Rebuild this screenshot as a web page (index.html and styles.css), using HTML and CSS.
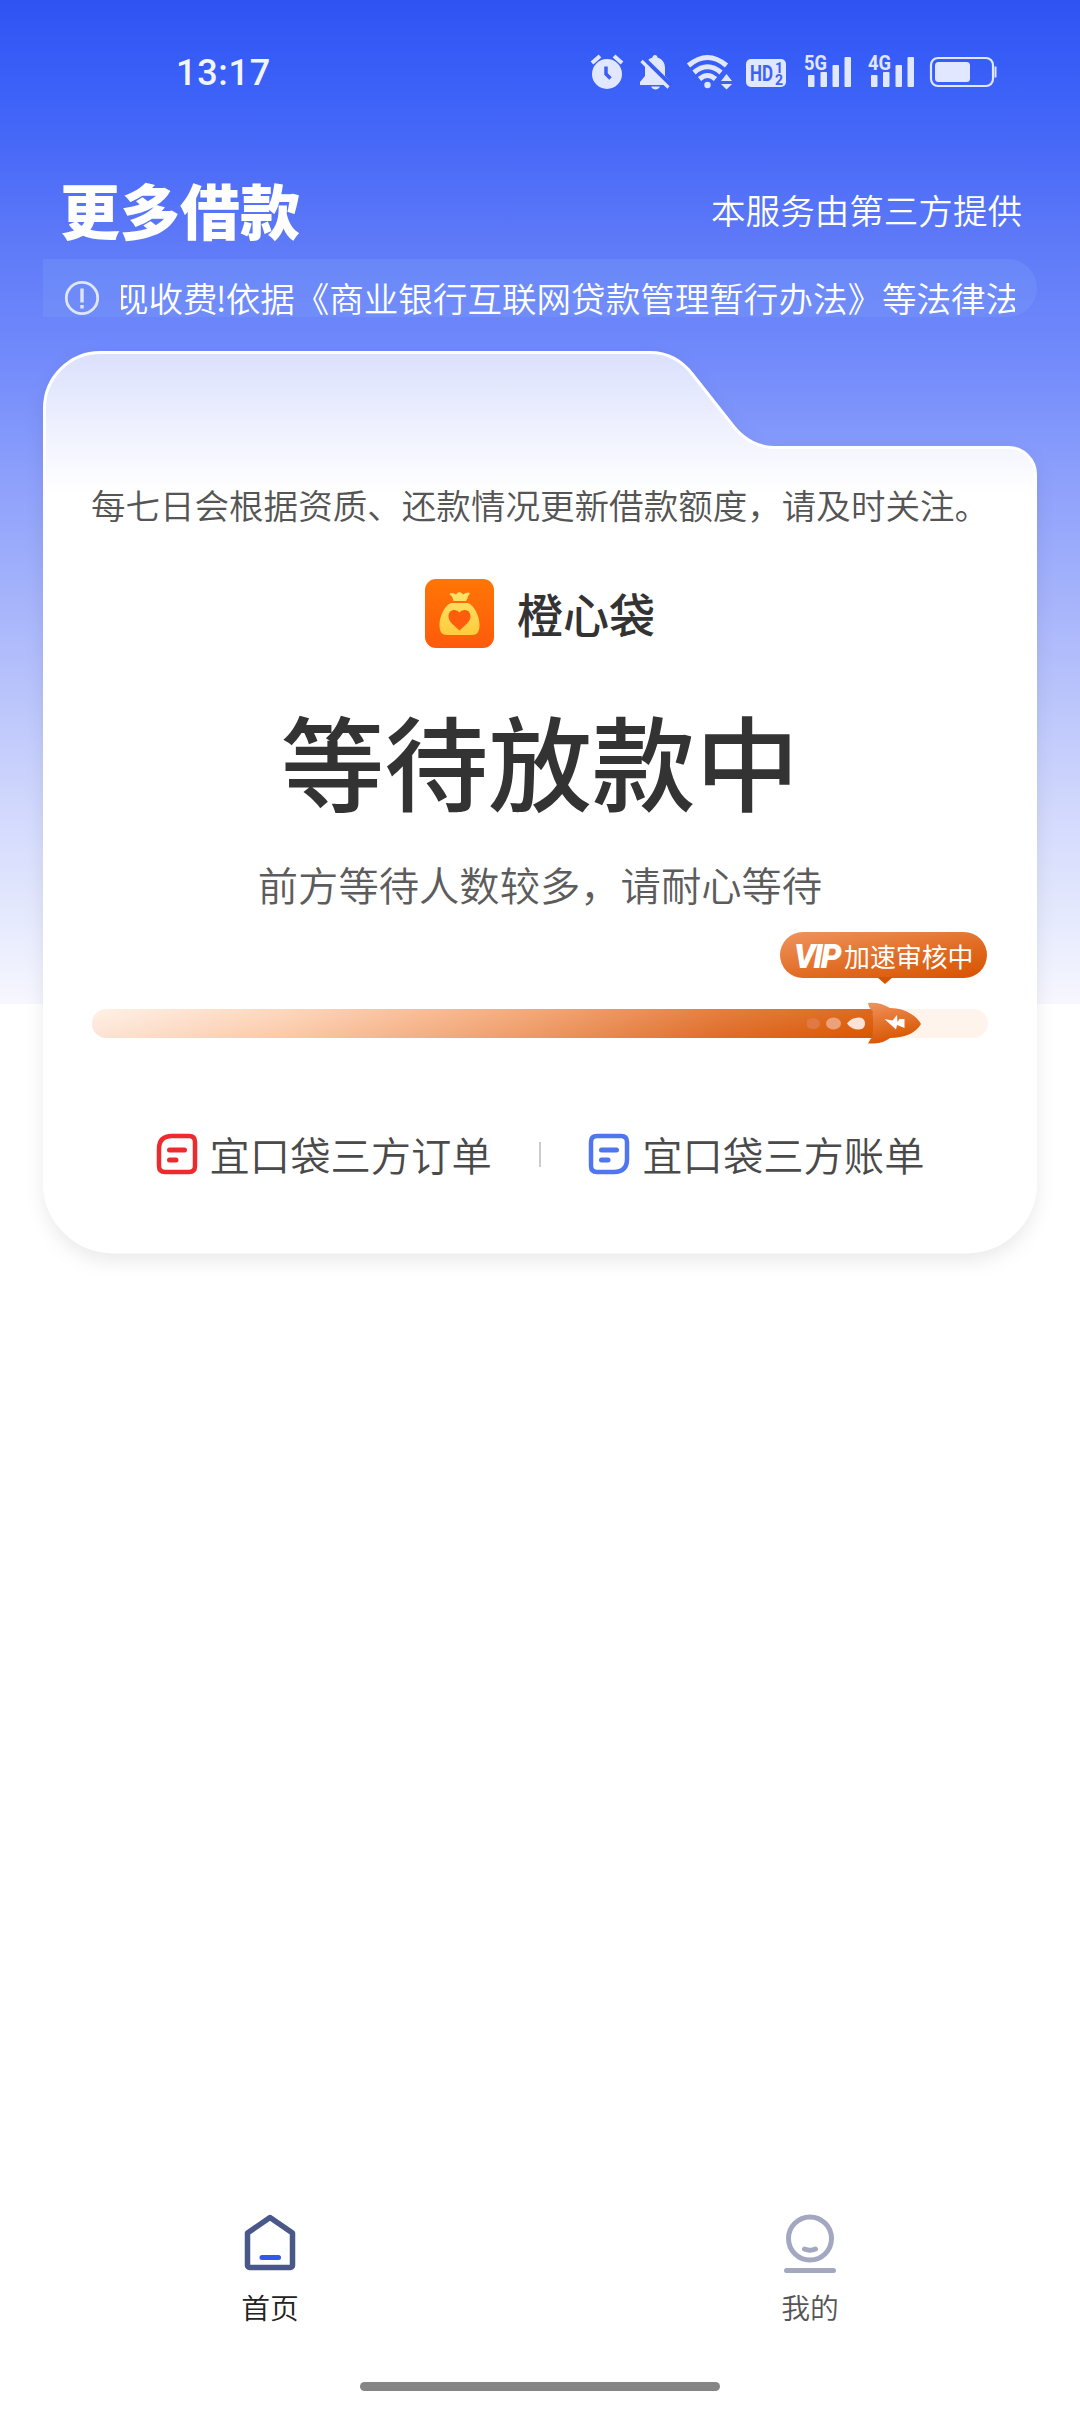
FILE: index.html
```html
<!DOCTYPE html>
<html lang="zh-CN">
<head>
<meta charset="utf-8">
<title>更多借款</title>
<link rel="stylesheet" href="styles.css">
</head>
<body>
<div class="screen">
  <div class="status">
    <span class="time">13:17</span>
    <svg class="status-icons" width="440" height="40" viewBox="590 52 440 40">
      <g fill="#e1e7ff">
        <circle cx="607" cy="74" r="15"/>
        <path d="M592 63l8-7M622 63l-8-7" stroke="#e1e7ff" stroke-width="4"/>
        <path d="M606 66.500v7.500l4.500 4.500" fill="none" stroke="#3a5ff5" stroke-width="3.500"/>
        <path d="M655 55c1.500 0 2.500 1 2.500 2.500 5 1.500 7.500 5.500 7.500 10.500v8l4.500 5v4h-29.500v-3l5-6v-8c0-5 2.500-9 7.500-10.500 0-1.500 1-2.500 2.500-2.500z"/>
        <path d="M651 86.500h9q-1.500 3-4.500 3t-4.500-3z"/>
        <path d="M642.500 58.500l28 27.500" stroke="#385df5" stroke-width="6"/>
        <path d="M641.500 61l27 26.500" stroke="#e1e7ff" stroke-width="3.200"/>
        <g fill="none" stroke="#e1e7ff" stroke-width="5">
          <path d="M688.500 65.500q19-16 38 0"/><path d="M694 72.500q13.500-11.500 27 0"/><path d="M699.500 79q8-7 16 0"/>
        </g>
        <circle cx="707.500" cy="85" r="3.200"/>
        <path d="M721 81l5.500-7 5.500 7zM721 84l5.500 5.500 5.500-5.500z"/>
        <rect x="746" y="59" width="40" height="28" rx="5"/>
        <rect x="808" y="75" width="6.500" height="12" rx="1"/><rect x="820.500" y="72" width="6.500" height="15" rx="1"/><rect x="832.500" y="65" width="6.500" height="22" rx="1"/><rect x="844.500" y="57" width="6.500" height="30" rx="1"/>
        <rect x="871" y="75" width="6.500" height="12" rx="1"/><rect x="883" y="72" width="6.500" height="15" rx="1"/><rect x="895.500" y="65" width="6.500" height="22" rx="1"/><rect x="907.500" y="57" width="6.500" height="30" rx="1"/>
        <rect x="935" y="62" width="35" height="20" rx="3.500"/>
        <rect x="931" y="58" width="62" height="28" rx="7" fill="none" stroke="#e1e7ff" stroke-width="2.200"/>
        <path d="M994.500 66.500h2v11h-2z"/>
      </g>
      <g font-family="Roboto" font-weight="700" fill="#3d61f5">
        <text x="750" y="81" font-size="22" textLength="23" lengthAdjust="spacingAndGlyphs">HD</text>
        <text x="775" y="72.500" font-size="14">1</text><text x="775" y="85" font-size="14">2</text>
      </g>
      <g font-family="Roboto" font-weight="700" fill="#e1e7ff" font-size="21">
        <text x="804" y="70" textLength="23" lengthAdjust="spacingAndGlyphs">5G</text>
        <text x="868" y="70" textLength="23" lengthAdjust="spacingAndGlyphs">4G</text>
      </g>
    </svg>
  </div>
  <header class="header">
    <h1>更多借款</h1>
    <span>本服务由第三方提供</span>
  </header>
  <div class="notice">
    <svg width="36" height="36" viewBox="0 0 36 36" fill="none" stroke="#dfe6ff" stroke-width="2.800"><circle cx="18" cy="18" r="15.700"/><path d="M18 8.500v14M18 25v3.500" stroke-width="3.400"/></svg>
    <div class="marquee"><p>现收费<i>!</i>依据《商业银行互联网贷款管理暂行办法》等法律法</p></div>
  </div>
  <main class="card">
    <svg class="card-shape" width="1080" height="960" viewBox="0 0 1080 960">
      <defs><linearGradient id="cardFill" x1="0" y1="0" x2="0" y2="1"><stop offset="0" stop-color="#dbe0fd"/><stop offset=".155" stop-color="#fff"/></linearGradient></defs>
      <path fill="url(#cardFill)" stroke="#fff" stroke-width="3" d="M44.500 98.500A56 56 0 0 1 100.500 42.500H650Q676 42.500 693 65L734 117Q751 137.500 775 137.500H1008A27 27 0 0 1 1035.500 164.500V873A69 69 0 0 1 966.500 942H113.500A69 69 0 0 1 44.500 873Z"/>
    </svg>
    <p class="hint">每七日会根据资质、还款情况更新借款额度，请及时关注。</p>
    <div class="brand">
      <svg width="69" height="69" viewBox="0 0 69 69">
        <defs><linearGradient id="or" x1="0" y1="0" x2="0" y2="1"><stop offset="0" stop-color="#ff7605"/><stop offset="1" stop-color="#ff5a0c"/></linearGradient><linearGradient id="bag" x1="0" y1="0" x2="0" y2="1"><stop offset="0" stop-color="#ffe46b"/><stop offset="1" stop-color="#ffcb3c"/></linearGradient></defs>
        <rect width="69" height="69" rx="11" fill="url(#or)"/>
        <path fill="url(#bag)" d="M24.500 15q2-1.500 4.500-.5l2 1q1.500-2.500 3.500-2.500t3.500 2.500l3-1.500q3-1 4 .5-2 2-2.500 4.500l-1.500 3h-12.500l-1-3.500q-1-2-3-3.500zM26 24h17c6 2 11.500 13 11.500 22 0 7-2.500 10-7.500 10h-25c-5 0-7.500-3-7.500-10 0-9 5.500-20 11.500-22z"/>
        <path fill="#ff5d0b" d="M34.500 33.500c-3-4-11-3.500-11 4 0 5.500 6 9 11 14 5-5 11-8.500 11-14 0-7.500-8-8-11-4z"/>
      </svg>
      <span>橙心袋</span>
    </div>
    <h2>等待放款中</h2>
    <p class="sub">前方等待人数较多，请耐心等待</p>
    <div class="progress">
      <div class="fill"></div>
      <svg class="rocket" width="114" height="44" viewBox="807 1001 114 44">
        <defs><linearGradient id="rk" x1="0" y1="0" x2=".3" y2="1"><stop offset="0" stop-color="#f0935e"/><stop offset="1" stop-color="#d85600"/></linearGradient></defs>
        <ellipse cx="813" cy="1023.500" rx="7" ry="5.500" fill="#e17943"/><ellipse cx="833.500" cy="1023.500" rx="7.500" ry="6" fill="#eda17b"/>
        <path d="M847 1023.500q4-6 12-6c8 0 8 12 0 12q-8 0-12-6z" fill="#fbe3d7"/>
        <path fill="url(#rk)" d="M868 1003q12-1 22 5c14 0 26 7 31 16-5 9-17 14-31 14-7 5-14 6-22 5.500q2-5 5-7-1-3 0-5.500v-14q-1-3 0-5.500-4-3-5-8.500z"/>
        <path fill="#fff" d="M897 1015l-4.500 5.500-8-1.500 11.500 10.500 1-4.500 7.500 3v-9h-5l-2 3z"/>
      </svg>
      <div class="vip"><b>VIP</b><span>加速审核中</span></div>
    </div>
    <nav class="links">
      <a><svg width="42" height="42" viewBox="0 0 42 42" fill="none" stroke="#ed2b2e" stroke-width="4.500" stroke-linecap="round"><path d="M16 3h17q6 0 6 6v24q0 6-6 6H9q-6 0-6-6V16Q3 3 16 3z"/><path d="M13.500 17h15M13.500 27h6.500" stroke-width="5"/></svg>宜口袋三方订单</a>
      <hr>
      <a><svg width="42" height="42" viewBox="0 0 42 42" fill="none" stroke="#4f75f0" stroke-width="4.500" stroke-linecap="round"><path d="M9 3h24q6 0 6 6v17Q39 39 26 39H9q-6 0-6-6V9q0-6 6-6z"/><path d="M13.500 17h15M13.500 27h6.500" stroke-width="5"/></svg>宜口袋三方账单</a>
    </nav>
  </main>
  <footer class="tabs">
    <a class="tab active"><svg width="60" height="60" viewBox="0 0 60 60" fill="none" stroke-linecap="round" stroke-linejoin="round"><path d="M30 4.500L52.500 20v32.500a2 2 0 0 1-2 2h-41a2 2 0 0 1-2-2V20z" stroke="#495889" stroke-width="5.500"/><path d="M22 44.500h16.500" stroke="#2f59e8" stroke-width="5"/></svg>首页</a>
    <a class="tab"><svg width="60" height="60" viewBox="0 0 60 60" fill="none" stroke="#a3a8c0" stroke-width="5" stroke-linecap="round"><circle cx="30" cy="25.500" r="21.500"/><path d="M24.500 36q5.500 2.500 11 0M6.500 57.500h47"/></svg>我的</a>
  </footer>
  <div class="home-bar"></div>
</div>
</body>
</html>
```
FILE: styles.css
```css
* { box-sizing: border-box; }
body, h1, h2, p { margin: 0; }
body {
  width: 1080px;
  background: #fff;
  font-family: "Noto Sans CJK SC", sans-serif;
  font-weight: 350;
}
.screen {
  height: 2412px;
  display: flex;
  flex-direction: column;
  overflow: hidden;
  background: linear-gradient(180deg, #2f53f3 0, #3a60f8 80px, #496af8 150px, #607bf8 250px, #7089fb 350px, #8da0fb 480px, #aab7fb 620px, #cdd5fc 790px, #f6f7fe 1004px) 0 0 / 100% 1004px no-repeat #fff;
}
.status {
  height: 144px;
  flex: none;
  display: flex;
  justify-content: space-between;
  padding: 52px 50px 0 176px;
}
.time {
  font: 500 36px/43px Roboto, sans-serif;
  color: #f2f5ff;
  letter-spacing: .7px;
}
.header {
  height: 115px;
  flex: none;
  display: flex;
  justify-content: space-between;
  padding: 0 58px 0 60px;
  color: #fff;
}
.header h1 {
  font-size: 60px;
  line-height: 130px;
  font-weight: 900;
}
.header span {
  font-size: 34.56px;
  line-height: 130px;
}
.notice {
  height: 58px;
  flex: none;
  display: flex;
  gap: 21px;
  margin: 0 43px;
  padding: 21px 21px 0;
  background: rgba(123, 160, 250, .32);
  border-radius: 0 29px 29px 0;
}
.notice svg { flex: none; }
.marquee {
  width: 894px;
  height: 52px;
  margin-top: -9px;
  overflow: hidden;
}
.marquee p {
  margin-left: -7px;
  font-size: 34.56px;
  line-height: 52px;
  white-space: nowrap;
  color: #fff;
}
.marquee i {
  display: inline-block;
  width: 8px;
  font-style: normal;
  text-indent: -2px;
}
.card {
  position: relative;
  height: 943px;
  flex: none;
  display: flex;
  flex-direction: column;
  align-items: center;
  padding-top: 162px;
}
.card-shape {
  position: absolute;
  top: -7px;
  left: 0;
  filter: drop-shadow(0 8px 9px rgba(0, 0, 0, .08));
}
.card > :not(.card-shape) { position: relative; }
.hint {
  font-size: 34.56px;
  line-height: 50px;
  color: #555;
  white-space: nowrap;
}
.brand {
  display: flex;
  align-items: center;
  gap: 23px;
  height: 69px;
  margin-top: 50px;
  font-size: 46.08px;
  line-height: 69px;
  font-weight: 500;
  color: #333;
}
h2 {
  margin-top: 36px;
  font-size: 103.68px;
  line-height: 150px;
  font-weight: 500;
  color: #333;
}
.sub {
  margin-top: 21px;
  font-size: 40.32px;
  line-height: 58px;
  color: #5c5c5c;
}
.progress {
  width: 896px;
  height: 29px;
  margin-top: 96px;
  border-radius: 15px;
  background: #fff4eb;
}
.fill {
  width: 785px;
  height: 29px;
  border-radius: 15px 0 0 15px;
  background: linear-gradient(177deg, rgba(255, 240, 230, .3), rgba(215, 80, 0, .2)), linear-gradient(90deg, #fff1e7 0, #ffd3b5 25%, #f2a06c 55%, #df6d28 80%, #d95700 100%);
}
.rocket {
  position: absolute;
  left: 715px;
  top: -8px;
}
.vip {
  position: absolute;
  left: 688px;
  top: -77px;
  width: 207px;
  height: 46px;
  display: flex;
  gap: 4px;
  padding-left: 14px;
  border-radius: 23px;
  background: linear-gradient(170deg, #ef945f, #e06a20 60%, #d75300);
  color: #fff;
  font-size: 25.9px;
  font-weight: 400;
  line-height: 48px;
  white-space: nowrap;
}
.vip::after {
  content: "";
  position: absolute;
  left: 97px;
  top: 45px;
  border: 8px solid transparent;
  border-top: 7px solid #d75300;
  border-bottom: 0;
}
.vip b {
  width: 46px;
  font: italic 900 33px/49px Roboto, sans-serif;
  letter-spacing: -2px;
}
.links {
  display: flex;
  align-items: center;
  width: 769px;
  height: 60px;
  margin-top: 86px;
}
.links a {
  display: flex;
  align-items: center;
  gap: 12px;
  font-size: 40.32px;
  line-height: 60px;
  color: #4a4a4a;
  white-space: nowrap;
}
.links hr {
  width: 2px;
  height: 25px;
  border: 0;
  margin: 0 auto;
  background: #ccc;
}
.tabs {
  display: flex;
  margin-top: auto;
  height: 169px;
  flex: none;
}
.tab {
  flex: 1;
  display: flex;
  flex-direction: column;
  align-items: center;
  font-size: 28.8px;
  line-height: 42px;
  gap: 13px;
  color: #555;
}
.tab.active { color: #222; }
.home-bar {
  width: 360px;
  height: 9px;
  flex: none;
  margin: 0 auto 21px;
  border-radius: 5px;
  background: #858585;
}
```
